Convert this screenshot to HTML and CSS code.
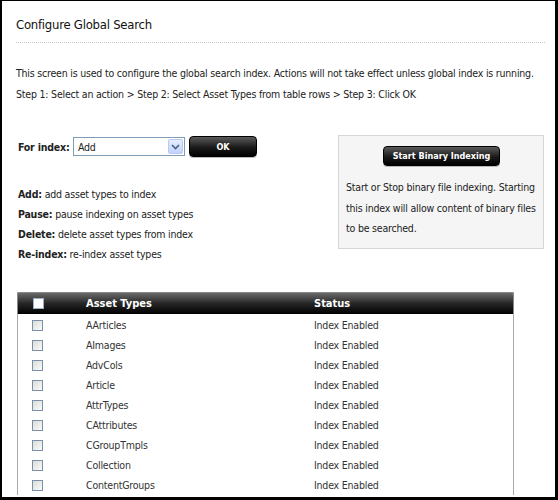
FILE: index.html
```html
<!DOCTYPE html>
<html>
<head>
<meta charset="utf-8">
<title>Configure Global Search</title>
<link rel="stylesheet" href="styles.css">
</head>
<body>
<div class="frame">
  <h1 class="title">Configure Global Search</h1>
  <div class="intro">
    <p>This screen is used to configure the global search index. Actions will not take effect unless global index is running.</p>
    <p>Step 1: Select an action &gt; Step 2: Select Asset Types from table rows &gt; Step 3: Click OK</p>
  </div>

  <div class="controls">
    <div class="actions">
      <div class="form-row">
        <label class="form-label">For index:</label>
        <div class="select">
          <span class="select-value">Add</span>
          <span class="select-arrow">
            <svg width="9" height="6" viewBox="0 0 9 6"><path d="M1 1 L4.5 4.5 L8 1" fill="none" stroke="#4d6185" stroke-width="1.6"/></svg>
          </span>
        </div>
        <button class="btn btn-ok">OK</button>
      </div>
      <ul class="legend">
        <li><b>Add:</b> add asset types to index</li>
        <li><b>Pause:</b> pause indexing on asset types</li>
        <li><b>Delete:</b> delete asset types from index</li>
        <li><b>Re-index:</b> re-index asset types</li>
      </ul>
    </div>

    <div class="binary-panel">
      <button class="btn btn-binary">Start Binary Indexing</button>
      <p>Start or Stop binary file indexing. Starting this index will allow content of binary files to be searched.</p>
    </div>
  </div>

  <div class="grid">
    <div class="grid-head">
      <span class="cell-check"><span class="check check-head"></span></span>
      <span class="cell-type">Asset Types</span>
      <span class="cell-status">Status</span>
    </div>
    <div class="grid-row"><span class="cell-check"><span class="check"></span></span><span class="cell-type">AArticles</span><span class="cell-status">Index Enabled</span></div>
    <div class="grid-row"><span class="cell-check"><span class="check"></span></span><span class="cell-type">AImages</span><span class="cell-status">Index Enabled</span></div>
    <div class="grid-row"><span class="cell-check"><span class="check"></span></span><span class="cell-type">AdvCols</span><span class="cell-status">Index Enabled</span></div>
    <div class="grid-row"><span class="cell-check"><span class="check"></span></span><span class="cell-type">Article</span><span class="cell-status">Index Enabled</span></div>
    <div class="grid-row"><span class="cell-check"><span class="check"></span></span><span class="cell-type">AttrTypes</span><span class="cell-status">Index Enabled</span></div>
    <div class="grid-row"><span class="cell-check"><span class="check"></span></span><span class="cell-type">CAttributes</span><span class="cell-status">Index Enabled</span></div>
    <div class="grid-row"><span class="cell-check"><span class="check"></span></span><span class="cell-type">CGroupTmpls</span><span class="cell-status">Index Enabled</span></div>
    <div class="grid-row"><span class="cell-check"><span class="check"></span></span><span class="cell-type">Collection</span><span class="cell-status">Index Enabled</span></div>
    <div class="grid-row"><span class="cell-check"><span class="check"></span></span><span class="cell-type">ContentGroups</span><span class="cell-status">Index Enabled</span></div>
  </div>
</div>
</body>
</html>
```

FILE: styles.css
```css
html, body {
  margin: 0;
  padding: 0;
  background: #000;
}

.frame {
  box-sizing: border-box;
  width: 558px;
  height: 500px;
  overflow: hidden;
  background: #fff;
  border-style: solid;
  border-color: #000;
  border-width: 1px 3px 3px 2px;
  padding: 14px 10px 0 14px;
  font-family: "DejaVu Sans Condensed", "DejaVu Sans", sans-serif;
  font-size: 10.5px;
  letter-spacing: -0.2px;
  color: #222;
}

.title {
  margin: 0;
  font-size: 13px;
  font-weight: normal;
  letter-spacing: -0.25px;
  line-height: 20px;
  color: #111;
  padding-bottom: 7px;
  border-bottom: 1px dotted #c8c8c8;
}

.intro {
  margin-top: 20px;
}

.intro p {
  margin: 0;
  line-height: 21px;
  white-space: nowrap;
}

.controls {
  display: flex;
  align-items: flex-start;
  margin-top: 31px;
}

.actions {
  flex: 1;
  padding-left: 2px;
}

.form-row {
  display: flex;
  align-items: center;
  height: 21px;
}

.form-label {
  flex: none;
  font-weight: bold;
  white-space: nowrap;
  width: 55px;
}

.select {
  flex: none;
  box-sizing: border-box;
  display: flex;
  align-items: center;
  width: 112px;
  height: 19px;
  border: 1px solid #7f9db9;
  background: #fff;
  padding: 0 1px 0 4px;
}

.select-value {
  flex: 1;
}

.select-arrow {
  box-sizing: border-box;
  width: 15px;
  height: 15px;
  display: flex;
  align-items: center;
  justify-content: center;
  border: 1px solid #b9c9ef;
  border-radius: 2px;
  background: linear-gradient(#e6eeff, #c1d3fb);
}

.btn {
  border: 1px solid #000;
  color: #fff;
  font-family: "DejaVu Sans Condensed", "DejaVu Sans", sans-serif;
  font-weight: bold;
  font-size: 9px;
  background: linear-gradient(#5a5a5a, #1a1a1a 55%, #000);
  border-radius: 4px;
  padding: 0;
  box-shadow: 0 1px 0 #bbb;
}

.btn-ok {
  flex: none;
  width: 68px;
  height: 21px;
  margin-left: 4px;
}

.legend {
  list-style: none;
  margin: 27px 0 0;
  padding: 0;
}

.legend li {
  line-height: 20px;
}

.binary-panel {
  box-sizing: border-box;
  width: 206px;
  margin-right: 1px;
  margin-top: -1px;
  border: 1px solid #d6d6d6;
  background: #f5f5f5;
  padding: 10px 6px 9px 7px;
  text-align: center;
}

.btn-binary {
  width: 117px;
  height: 20px;
}

.binary-panel p {
  margin: 11px 0 0;
  text-align: left;
  line-height: 20.5px;
}

.grid {
  margin-top: 28px;
  margin-left: 1px;
  width: 497px;
  box-sizing: border-box;
  border-left: 1px solid #aaa;
  border-right: 1px solid #aaa;
}

.grid-head,
.grid-row {
  display: flex;
  align-items: center;
}

.grid-head {
  height: 21px;
  margin: 0 -1px 1px;
  border: 1px solid #888;
  border-bottom: none;
  border-radius: 2px 2px 0 0;
  background: linear-gradient(#6a6a6a, #262626 50%, #000);
  color: #fff;
  font-weight: bold;
  font-size: 11px;
  letter-spacing: 0;
}

.grid-row {
  height: 20px;
  color: #333;
}

.cell-check {
  box-sizing: border-box;
  width: 68px;
  padding-left: 14px;
  display: flex;
}

.grid-head .cell-check {
  padding-left: 15px;
}

.cell-type {
  width: 228px;
}

.check {
  box-sizing: border-box;
  width: 11px;
  height: 11px;
  border: 1px solid #7a8fa8;
  background: linear-gradient(135deg, #dcdcd6, #fafafa);
}

.check-head {
  background: #fff;
  border-color: #9db0c8;
}
```
